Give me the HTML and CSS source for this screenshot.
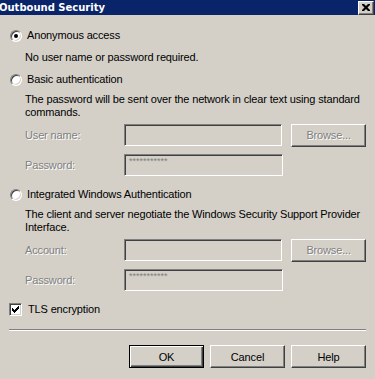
FILE: index.html
```html
<!DOCTYPE html>
<html lang="en">
<head>
  <meta charset="UTF-8" />
  <meta name="viewport" content="width=device-width, initial-scale=1.0" />
  <title>Outbound Security</title>
  <link rel="stylesheet" href="styles.css">
</head>
<body>
<div class="dialog">
  <div class="titlebar">
    <span class="title">Outbound Security</span>
    <span class="close">
      <svg width="8" height="7" viewBox="0 0 8 7"><path d="M0 0h2l2 2 2-2h2v1l-2.5 2.5 2.5 2.5v1h-2l-2-2-2 2h-2v-1l2.5-2.5-2.5-2.5z" fill="#000"/></svg>
    </span>
  </div>

  <div class="content">
    <div class="option first">
      <span class="radio checked"></span>
      <span class="label">Anonymous access</span>
    </div>
    <p class="desc short">No user name or password required.</p>

    <div class="option">
      <span class="radio"></span>
      <span class="label">Basic authentication</span>
    </div>
    <p class="desc">The password will be sent over the network in clear text using standard<br>commands.</p>
    <div class="field">
      <span class="field-label">User name:</span>
      <span class="input"></span>
      <span class="button disabled">Browse...</span>
    </div>
    <div class="field">
      <span class="field-label">Password:</span>
      <span class="input"><span class="mask">***********</span></span>
    </div>

    <div class="option">
      <span class="radio"></span>
      <span class="label">Integrated Windows Authentication</span>
    </div>
    <p class="desc">The client and server negotiate the Windows Security Support Provider<br>Interface.</p>
    <div class="field">
      <span class="field-label">Account:</span>
      <span class="input"></span>
      <span class="button disabled">Browse...</span>
    </div>
    <div class="field">
      <span class="field-label">Password:</span>
      <span class="input"><span class="mask">***********</span></span>
    </div>

    <div class="check-row">
      <span class="checkbox">
        <svg width="7" height="7" viewBox="0 0 7 7"><path d="M0 2h1v1h1v1h1v-1h1v-1h1v-1h1v-1h1v3h-1v1h-1v1h-1v1h-1v1h-1v-1h-1v-1h-1z" fill="#000"/></svg>
      </span>
      <span class="label">TLS encryption</span>
    </div>

    <div class="separator"></div>

    <div class="actions">
      <span class="button default">OK</span>
      <span class="button">Cancel</span>
      <span class="button">Help</span>
    </div>
  </div>
</div>
</body>
</html>
```

FILE: styles.css
```css
body {
    margin: 0;
    background: #d4d0c8;
    font-family: "Liberation Sans", Arial, sans-serif;
    font-size: 11px;
    letter-spacing: -0.15px;
    color: #000;
}
.dialog {
    width: 375px;
    height: 379px;
    background: #d4d0c8;
}
.titlebar {
    height: 15px;
    background: #0a246a;
    display: flex;
    align-items: center;
    justify-content: space-between;
}
.title {
    color: #fff;
    font-family: "DejaVu Sans", Verdana, sans-serif;
    font-weight: bold;
    font-size: 10px;
    letter-spacing: 0;
    margin-left: -1px;
    line-height: 15px;
}
.close {
    width: 14px;
    height: 12px;
    margin-right: 1px;
    background: #d4d0c8;
    border: 1px solid;
    border-color: #fff #404040 #404040 #fff;
    box-shadow: inset -1px -1px #808080;
    display: flex;
    align-items: center;
    justify-content: center;
}
.content {
    padding: 14px 9px 0 10px;
}
.option {
    display: flex;
    align-items: center;
    height: 13px;
    margin-top: 12px;
}
.option.first {
    margin-top: 0;
}
.radio {
    width: 10px;
    height: 10px;
    border-radius: 50%;
    border: 1px solid;
    border-color: #808080 #fff #fff #808080;
    box-shadow: inset 1px 1px #404040, inset -1px -1px #d4d0c8;
    background: #fff;
    display: flex;
    align-items: center;
    justify-content: center;
}
.radio.checked::after {
    content: "";
    width: 4px;
    height: 4px;
    border-radius: 50%;
    background: #000;
}
.label {
    margin-left: 5px;
    line-height: 13px;
    white-space: nowrap;
}
.desc {
    margin: 7px 0 0 15px;
    line-height: 13px;
    white-space: nowrap;
}
.desc.short {
    margin-top: 9px;
    margin-bottom: -3px;
}
.field {
    display: flex;
    align-items: center;
    margin: 5px 0 0 15px;
    height: 22px;
}
.field + .field {
    margin-top: 8px;
}
.field-label {
    width: 99px;
    color: #808080;
    text-shadow: 1px 1px #fff;
}
.input {
    box-sizing: border-box;
    width: 159px;
    height: 22px;
    border: 1px solid;
    border-color: #808080 #fff #fff #808080;
    box-shadow: inset 1px 1px #404040, inset -1px -1px #d4d0c8;
    padding: 2px 0 0 4px;
}
.mask {
    display: block;
    font-size: 9px;
    line-height: 9px;
    color: #808080;
    letter-spacing: 0;
}
.button {
    box-sizing: border-box;
    width: 75px;
    height: 23px;
    margin-left: 9px;
    border: 1px solid;
    border-color: #fff #404040 #404040 #fff;
    box-shadow: inset -1px -1px #808080;
    display: flex;
    align-items: center;
    justify-content: center;
}
.button.disabled {
    color: #808080;
    text-shadow: 1px 1px #fff;
}
.check-row {
    display: flex;
    align-items: center;
    margin-top: 12px;
    height: 13px;
}
.checkbox {
    box-sizing: border-box;
    width: 13px;
    height: 13px;
    margin-left: -1px;
    border: 1px solid;
    border-color: #808080 #fff #fff #808080;
    box-shadow: inset 1px 1px #404040, inset -1px -1px #d4d0c8;
    background: #fff;
    display: flex;
    align-items: center;
    justify-content: center;
}
.check-row .label {
    margin-left: 6px;
}
.separator {
    margin: 13px 0 0 -1px;
    border-top: 1px solid #808080;
    border-bottom: 1px solid #fff;
    height: 0;
}
.actions {
    display: flex;
    justify-content: flex-end;
    margin-top: 14px;
}
.actions .button {
    margin-left: 6px;
}
.button.default {
    border: 1px solid #000;
    box-shadow: inset 1px 1px #fff, inset -1px -1px #404040, inset -2px -2px #808080;
}
```
